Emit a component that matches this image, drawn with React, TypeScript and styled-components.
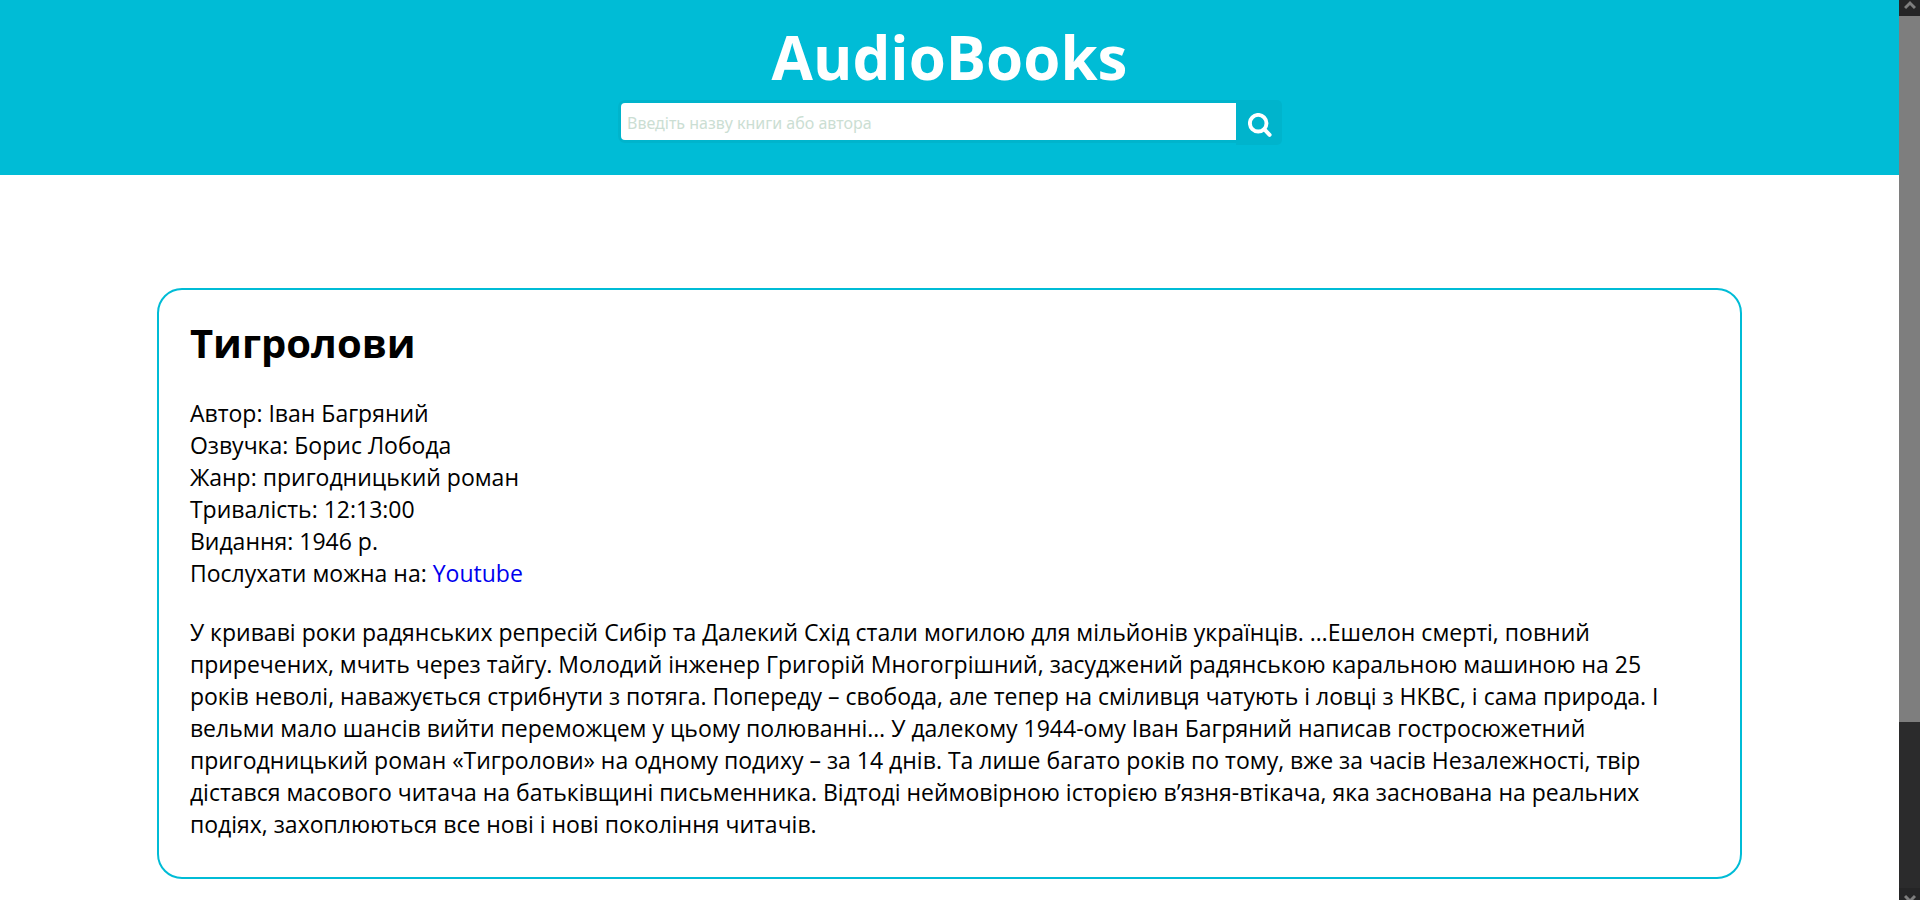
import React from "react";
import styled, { createGlobalStyle } from "styled-components";

const accent = "#00bcd6";

const GlobalStyle = createGlobalStyle`
  * { box-sizing: border-box; }
  body {
    margin: 0;
    background: #fff;
    color: #000;
    font-family: "Open Sans", "Noto Sans", sans-serif;
    font-size: 23px;
    line-height: 32px;
  }
`;

const Shell = styled.div`
  display: flex;
  align-items: flex-start;
`;

const Page = styled.div`
  flex: 1;
  min-width: 0;
`;

const Header = styled.header`
  display: flex;
  flex-direction: column;
  align-items: center;
  padding: 16px 16px 30px;
  background: ${accent};
`;

const SiteTitle = styled.h1`
  margin: 0;
  color: #fff;
  font-size: 60px;
  line-height: 82px;
`;

const SearchForm = styled.form`
  display: flex;
  align-items: flex-start;
  width: 665px;
  max-width: 100%;
  padding: 2px 0 0 4px;
`;

const SearchInput = styled.input`
  flex: 1;
  min-width: 0;
  height: 37px;
  margin-top: 3px;
  padding: 2px 6px 0;
  border: 0;
  border-radius: 4px 0 0 4px;
  background: #fff;
  box-shadow: 0 0 0 3px #00b4cc;
  font-family: "Noto Sans", sans-serif;
  font-size: 16px;
  outline: none;
  &::placeholder { color: #cbded3; opacity: 1; }
`;

const SearchButton = styled.button`
  position: relative;
  display: flex;
  align-items: center;
  justify-content: center;
  width: 46px;
  height: 45px;
  padding: 5px 0 0 2px;
  border: 0;
  border-radius: 0 5px 5px 0;
  background: #00b4cc;
  color: #fff;
`;

const Main = styled.main`
  padding: 113px 0 21px;
`;

const BookCard = styled.article`
  box-sizing: content-box;
  width: 80%;
  margin: 0 auto;
  padding: 26px 31px 37px;
  border: 2px solid ${accent};
  border-radius: 25px;
`;

const BookTitle = styled.h2`
  margin: 0 0 27px;
  font-size: 40px;
  line-height: 54px;
`;

const Facts = styled.ul`
  margin: 0 0 27px;
  padding: 0;
  list-style: none;
`;

const Description = styled.p`
  margin: 0;
  padding-right: 20px;
`;

const Link = styled.a`
  color: #0000ee;
  text-decoration: none;
`;

const ScrollRail = styled.div`
  position: sticky;
  top: 0;
  display: flex;
  flex-direction: column;
  width: 21px;
  height: 100vh;
  background: #2b2b2c;
`;

const RailEnd = styled.div<{ $size: number }>`
  display: flex;
  flex: none;
  align-items: flex-start;
  justify-content: center;
  height: ${(p) => p.$size}px;
  overflow: hidden;
  background: #252526;
`;

const RailTrack = styled.div`
  flex: 1;
`;

const RailThumb = styled.div`
  height: 81%;
  background: #7e7e7e;
`;

const facts = [
  "Автор: Іван Багряний",
  "Озвучка: Борис Лобода",
  "Жанр: пригодницький роман",
  "Тривалість: 12:13:00",
  "Видання: 1946 р.",
];

export default function App() {
  return (
    <>
      <GlobalStyle />
      <Shell>
        <Page>
          <Header>
            <SiteTitle>AudioBooks</SiteTitle>
            <SearchForm role="search" onSubmit={(e) => e.preventDefault()}>
              <SearchInput
                type="text"
                aria-label="Введіть назву книги або автора"
                placeholder="Введіть назву книги або автора"
              />
              <SearchButton type="submit" aria-label="Пошук">
                <svg width="24" height="24" viewBox="0 0 24 24" fill="none" stroke="currentColor">
                  <circle cx="10.2" cy="10.2" r="8.3" strokeWidth="3.9" />
                  <path d="M16.4 16.4l5.2 5.4" strokeWidth="4" strokeLinecap="round" />
                </svg>
              </SearchButton>
            </SearchForm>
          </Header>
          <Main>
            <BookCard>
              <BookTitle>Тигролови</BookTitle>
              <Facts>
                {facts.map((fact) => (
                  <li key={fact}>{fact}</li>
                ))}
                <li>
                  Послухати можна на: <Link href="#youtube">Youtube</Link>
                </li>
              </Facts>
              <Description>
                У криваві роки радянських репресій Сибір та Далекий Схід стали могилою для мільйонів
                українців. …Ешелон смерті, повний приречених, мчить через тайгу. Молодий інженер
                Григорій Многогрішний, засуджений радянською каральною машиною на 25 років неволі,
                наважується стрибнути з потяга. Попереду – свобода, але тепер на сміливця чатують і
                ловці з НКВС, і сама природа. І вельми мало шансів вийти переможцем у цьому
                полюванні… У далекому 1944-ому Іван Багряний написав гостросюжетний пригодницький
                роман «Тигролови» на одному подиху – за 14 днів. Та лише багато років по тому, вже
                за часів Незалежності, твір дістався масового читача на батьківщині письменника.
                Відтоді неймовірною історією в’язня-втікача, яка заснована на реальних подіях,
                захоплюються все нові і нові покоління читачів.
              </Description>
            </BookCard>
          </Main>
        </Page>
        <ScrollRail aria-hidden="true">
          <RailEnd $size={16}>
            <svg width="12" height="10" viewBox="0 0 12 10" fill="none" stroke="#7e7e7e" strokeWidth="3">
              <path d="M1 8l5-5 5 5" />
            </svg>
          </RailEnd>
          <RailTrack>
            <RailThumb />
          </RailTrack>
          <RailEnd $size={12}>
            <svg width="12" height="16" viewBox="0 0 12 16" fill="none" stroke="#7e7e7e" strokeWidth="3">
              <path d="M1 8l5 5 5-5" />
            </svg>
          </RailEnd>
        </ScrollRail>
      </Shell>
    </>
  );
}
